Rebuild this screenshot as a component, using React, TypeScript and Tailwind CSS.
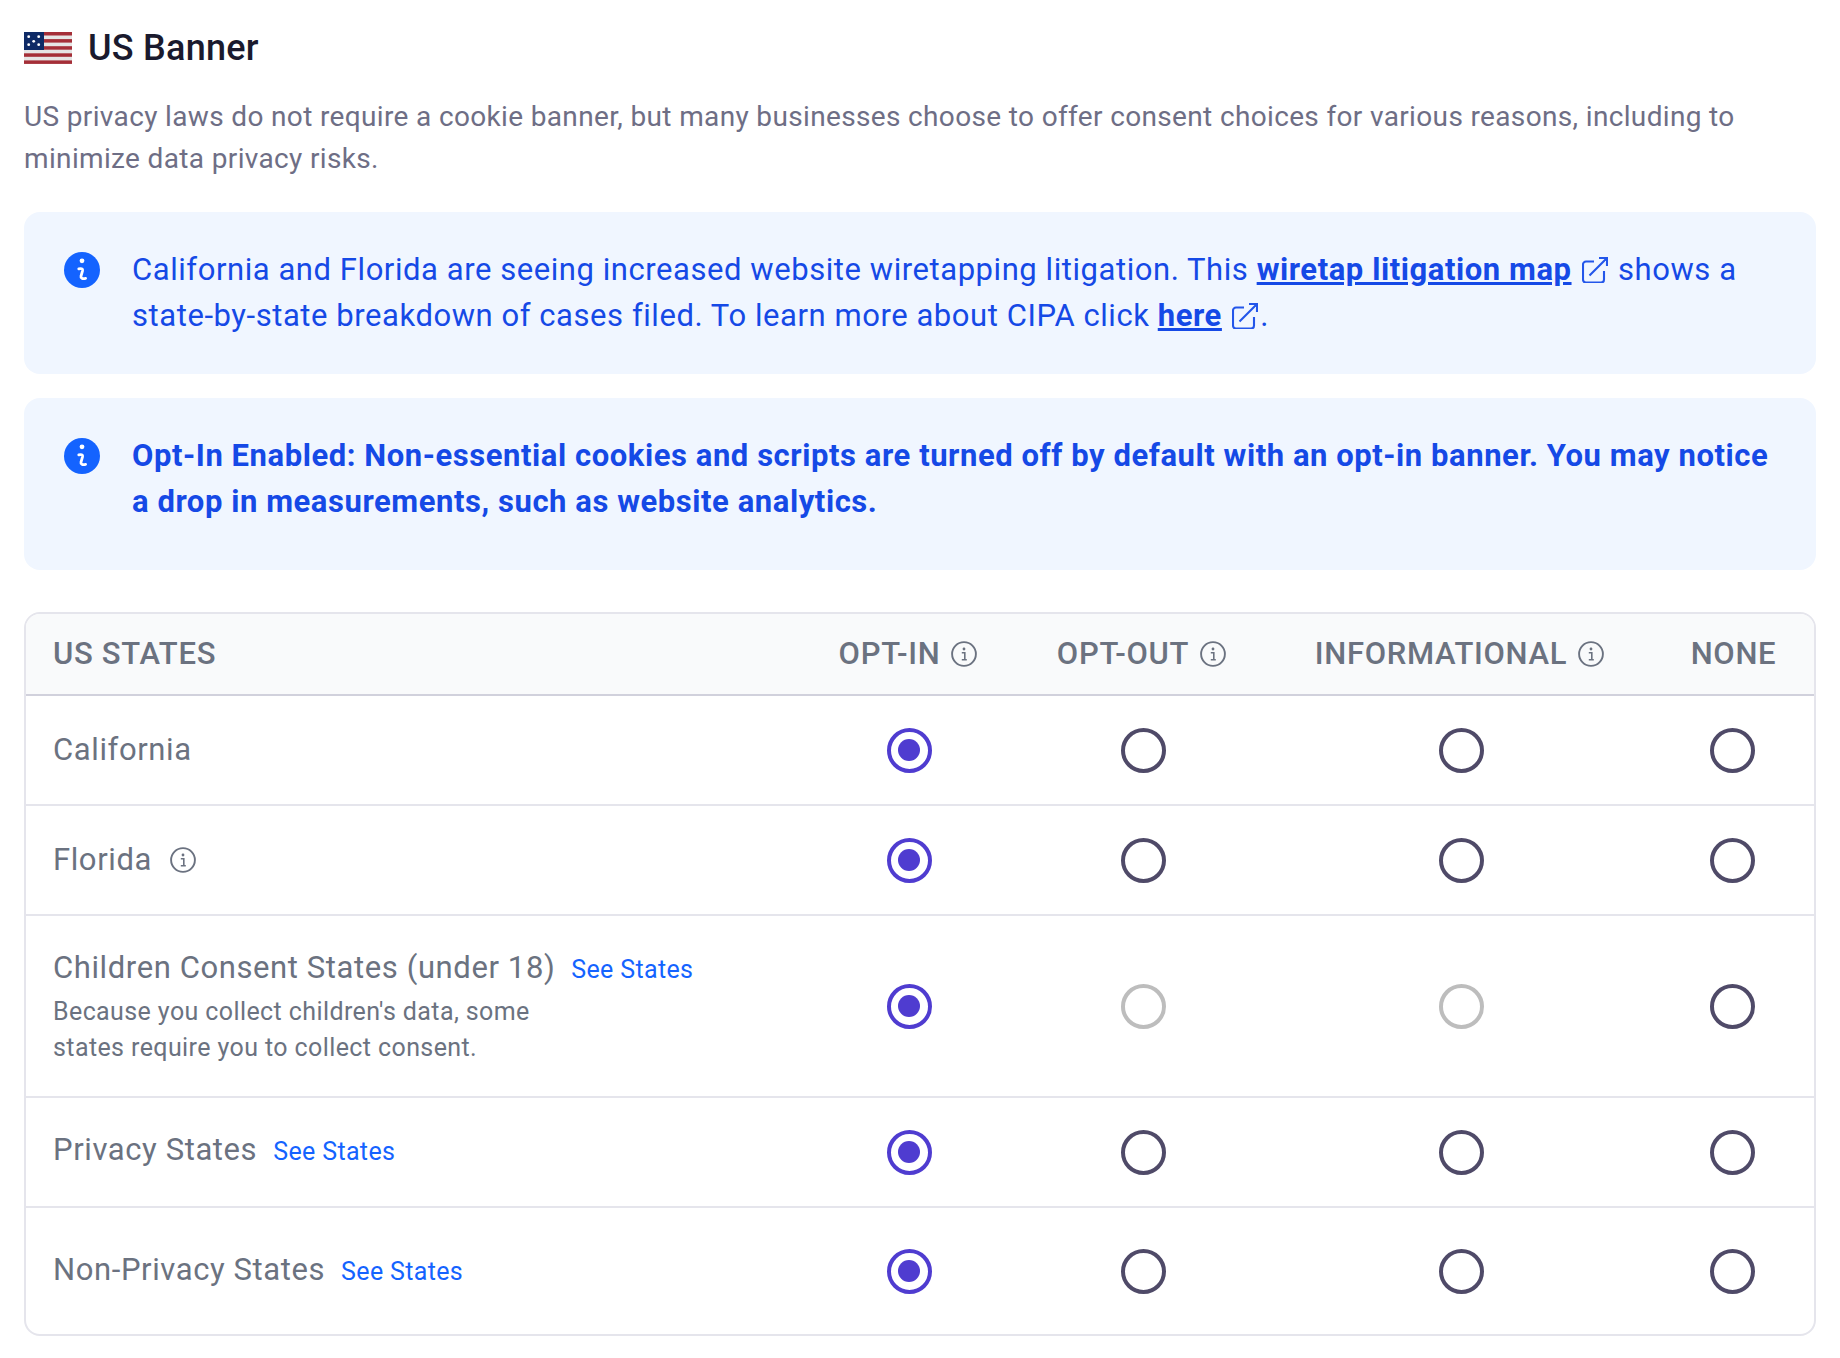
import { ReactNode } from "react";

const radioColumns = ["opt-in", "opt-out", "informational", "none"];

function InfoSolid() {
  return (
    <svg width="36" height="36" viewBox="0 0 36 36" className="shrink-0">
      <circle cx="18" cy="18" r="18" fill="#1463ff" />
      <circle cx="18" cy="8.800" r="2.400" fill="#fff" />
      <path d="M14.800 16.800c2-.5 4.200-.4 3.700 2L17 24c-.5 2.200 1.400 3.200 4.600 2.400" fill="none" stroke="#fff" strokeWidth="2.800" strokeLinecap="round" />
    </svg>
  );
}

function InfoOutline() {
  return (
    <svg width="26" height="26" viewBox="0 0 26 26" className="shrink-0">
      <circle cx="13" cy="13" r="11.900" fill="none" stroke="#6b7280" strokeWidth="1.900" />
      <circle cx="13" cy="8" r="1.400" fill="#6b7280" />
      <path d="M10.800 11.800h3v6.400M10.800 18.800h5" fill="none" stroke="#6b7280" strokeWidth="1.600" />
    </svg>
  );
}

function ExternalLink() {
  return (
    <svg width="26" height="26" viewBox="0 0 26 26" className="mx-[2px] inline-block align-[-3px]" fill="none" stroke="#2356ea" strokeWidth="2.100">
      <path d="M12 4.500H4a3 3 0 0 0-3 3v15a3 3 0 0 0 3 3h15a3 3 0 0 0 3-3V14" />
      <path d="M7.500 18.500 25 1M17 1h8v8" />
    </svg>
  );
}

function Flag() {
  const stripes = [0, 1, 2, 3, 4];
  return (
    <svg width="48" height="32" viewBox="0 0 48 32" className="shrink-0">
      <rect width="48" height="32" fill="#e6e6e6" />
      {stripes.map((s) => (
        <rect key={s} y={s * 7.100} width="48" height="3.500" fill="#a52f38" />
      ))}
      <rect width="20" height="18" fill="#0e2a66" />
      {[[4.700, 4.700], [14.700, 4.700], [9.700, 9.300], [4.700, 12.700], [14.700, 12.700]].map(([x, y]) => (
        <circle key={`${x}-${y}`} cx={x} cy={y} r="1.400" fill="#fff" />
      ))}
    </svg>
  );
}

function Radio({ checked, disabled }: { checked?: boolean; disabled?: boolean }) {
  if (checked) {
    return (
      <span className="flex h-[45px] w-[45px] items-center justify-center rounded-full border-4 border-[#4f3cd0]">
        <span className="h-[22px] w-[22px] rounded-full bg-[#4f3cd0]" />
      </span>
    );
  }
  return (
    <span className={`block h-[45px] w-[45px] rounded-full border-4 ${disabled ? "border-[#bdbdbd]" : "border-[#4f4a68]"}`} />
  );
}

function SeeStates() {
  return <a className="text-[25px] tracking-[0.35px] text-[#1463ff]">See States</a>;
}

function Row({ label, disabled, height, last }: { label: ReactNode; disabled?: boolean; height: string; last?: boolean }) {
  return (
    <div className={`grid grid-cols-[778px_210px_258px_378px_164px] items-center ${height} ${last ? "" : "border-b-2 border-[#e5e5ec]"}`}>
      <div className="pl-[27px]">{label}</div>
      {radioColumns.map((c, i) => (
        <div key={c} className="flex justify-center">
          <Radio checked={i === 0} disabled={disabled && (i === 1 || i === 2)} />
        </div>
      ))}
    </div>
  );
}

function Notice({ children, height }: { children: ReactNode; height: string }) {
  return (
    <div className={`flex gap-[32px] rounded-[16px] bg-[#f0f6ff] pl-[40px] pr-[32px] pt-[35px] ${height}`}>
      <div className="pt-[5px]">
        <InfoSolid />
      </div>
      <div className="text-[31px] leading-[46px] tracking-[0.56px] text-[#1549e6]">{children}</div>
    </div>
  );
}

export default function App() {
  return (
    <div className="min-h-[1358px] bg-white px-[24px] pt-[28px] font-['Roboto',sans-serif]">
      <div className="flex items-center gap-[16px]">
        <Flag />
        <h1 className="text-[36px] font-medium leading-[40px] tracking-[0.25px] text-[#1a1a2e]">US Banner</h1>
      </div>

      <p className="mt-[28px] text-[28px] leading-[42px] tracking-[0.35px] text-[#6e6e85]">
        US privacy laws do not require a cookie banner, but many businesses choose to offer consent choices for various reasons, including to minimize data privacy risks.
      </p>

      <div className="mt-[32px] flex flex-col gap-[24px]">
        <Notice height="h-[162px]">
          California and Florida are seeing increased website wiretapping litigation. This{" "}
          <a className="font-bold underline">wiretap litigation map</a> <ExternalLink /> shows a state-by-state breakdown of cases filed. To learn more about CIPA click{" "}
          <a className="font-bold underline">here</a> <ExternalLink />.
        </Notice>
        <Notice height="h-[172px]">
          <strong className="font-bold">
            Opt-In Enabled: Non-essential cookies and scripts are turned off by default with an opt-in banner. You may notice a drop in measurements, such as website analytics.
          </strong>
        </Notice>
      </div>

      <div className="mt-[42px] overflow-hidden rounded-[16px] border-2 border-[#e5e5ec]">
        <div className="grid h-[82px] grid-cols-[778px_210px_258px_378px_164px] items-center border-b-2 border-[#d1d1dc] bg-[#f9fafb] text-[31px] font-medium tracking-[0.7px] text-[#6b7280]">
          <div className="pl-[27px]">US STATES</div>
          <div className="flex items-center justify-center gap-[11px] pr-[2px]">OPT-IN <InfoOutline /></div>
          <div className="flex items-center justify-center gap-[11px] pr-[3px]">OPT-OUT <InfoOutline /></div>
          <div className="flex items-center justify-center gap-[11px] pr-[3px]">INFORMATIONAL <InfoOutline /></div>
          <div className="pl-[3px] text-center">NONE</div>
        </div>
        <Row height="h-[110px]" label={<span className="block text-[31px] tracking-[0.6px] text-[#6b7280]">California</span>} />
        <Row
          height="h-[110px]"
          label={
            <span className="flex items-center gap-[18px] text-[31px] tracking-[0.6px] text-[#6b7280]">
              Florida <InfoOutline />
            </span>
          }
        />
        <Row
          height="h-[182px]"
          disabled
          label={
            <div className="pb-[1px] text-[#6b7280]">
              <div className="flex items-baseline gap-[16px] text-[31px] tracking-[0.6px]">
                Children Consent States (under 18) <SeeStates />
              </div>
              <div className="mt-[2px] w-[520px] text-[25px] leading-[36px] tracking-[0.4px]">
                Because you collect children's data, some states require you to collect consent.
              </div>
            </div>
          }
        />
        <Row
          height="h-[110px]"
          label={
            <span className="flex items-baseline gap-[16px] pb-[3px] text-[31px] tracking-[0.6px] text-[#6b7280]">
              Privacy States <SeeStates />
            </span>
          }
        />
        <Row
          height="h-[126px]"
          last
          label={
            <span className="flex items-baseline gap-[16px] pb-[2px] text-[31px] tracking-[0.6px] text-[#6b7280]">
              Non-Privacy States <SeeStates />
            </span>
          }
        />
      </div>
    </div>
  );
}
